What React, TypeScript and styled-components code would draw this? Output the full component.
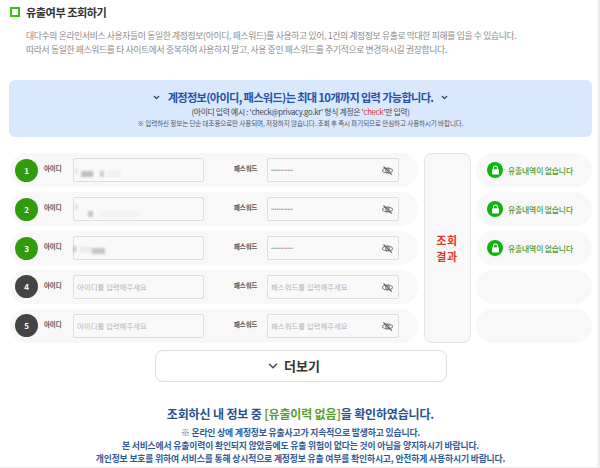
import * as React from 'react'
import styled, {createGlobalStyle} from 'styled-components'
import {ChevronDown} from 'lucide-react'

const Global = createGlobalStyle`
  html, body {
    margin: 0;
    padding: 0;
    background: #fff;
  }
  body {
    font-family: "Noto Sans CJK KR", "Noto Sans", sans-serif;
    color: #333;
  }
`

const Page = styled.div`
  width: 583px;
  height: 467px;
  overflow: hidden;
  border-right: 2px solid #ececec;
  border-bottom: 1px solid #ececec;
  padding: 0 6px 0 9px;
`

const TitleRow = styled.div`
  display: flex;
  align-items: center;
  gap: 6px;
  height: 24px;
`

const TitleMark = styled.span`
  display: block;
  width: 10px;
  height: 10px;
  margin-left: 1px;
  box-sizing: border-box;
  border: 2.5px solid #3cc212;
`

const Title = styled.h1`
  margin: 0;
  font-size: 11.2px;
  font-weight: 700;
  letter-spacing: -0.5px;
  color: #333;
`

const Intro = styled.p`
  margin: 5px 0 0 17px;
  font-size: 8.8px;
  line-height: 13.6px;
  letter-spacing: -0.34px;
  color: #8b8b8b;
  white-space: nowrap;
`

const Banner = styled.div`
  height: 57px;
  margin-top: 24px;
  background: #d9e8fd;
  border-radius: 6px;
  display: flex;
  flex-direction: column;
  align-items: center;
  padding-top: 9px;
  box-sizing: border-box;
`

const BannerTitle = styled.div`
  display: flex;
  align-items: center;
  gap: 7px;
  font-size: 11.2px;
  line-height: 17px;
  font-weight: 700;
  letter-spacing: -0.66px;
  color: #2452a8;
  svg {
    color: #26365c;
  }
`

const BannerHint = styled.div`
  font-size: 7.8px;
  line-height: 12px;
  letter-spacing: -0.3px;
  color: #444;
  em {
    font-style: normal;
    color: #d8352a;
  }
`

const BannerNote = styled.div`
  font-size: 6.5px;
  line-height: 10px;
  letter-spacing: -0.08px;
  color: #555;
`

const Board = styled.div`
  display: grid;
  grid-template-columns: 408px 47px 116px;
  column-gap: 5.5px;
  margin: 16px 0 0 1px;
`

const Rows = styled.div`
  display: flex;
  flex-direction: column;
  gap: 5.3px;
`

const Row = styled.div`
  height: 33.7px;
  display: flex;
  align-items: center;
  border-radius: 17px;
  background: #f8f8f8;
  padding-left: 5px;
`

const Badge = styled.span<{$active: boolean}>`
  width: 23px;
  height: 23px;
  flex: none;
  border-radius: 50%;
  display: flex;
  align-items: center;
  justify-content: center;
  font-size: 8px;
  font-weight: 700;
  color: #fff;
  background: ${props => (props.$active ? '#319c0b' : '#444')};
`

const FieldLabel = styled.span<{$width: number}>`
  width: ${props => props.$width}px;
  flex: none;
  align-self: center;
  margin-top: -3px;
  font-size: 6.4px;
  font-weight: 700;
  letter-spacing: -0.05px;
  color: #555;
`

const IdLabel = styled(FieldLabel)`
  margin-left: 6px;
`

const PwLabel = styled(FieldLabel)`
  margin-left: 30px;
`

const Field = styled.div<{$width: number}>`
  position: relative;
  width: ${props => props.$width}px;
  height: 24px;
  flex: none;
  box-sizing: border-box;
  display: flex;
  align-items: center;
  padding-left: 3px;
  background: #f9f9fa;
  border: 1px solid #dcdde0;
  border-radius: 2px;
  font-size: 7.4px;
  color: #b4b4b4;
  letter-spacing: 0.02px;
`

const EyeSlot = styled.svg`
  position: absolute;
  right: 4px;
  top: 6px;
  color: #666;
`

const Masked = styled.span<{$left: number; $top: number; $width: number; $dark: number}>`
  position: absolute;
  left: ${props => props.$left}px;
  top: ${props => props.$top}px;
  width: ${props => props.$width}px;
  height: 6px;
  background: rgba(120, 120, 130, ${props => props.$dark});
  filter: blur(1px);
`

const Dots = styled.span`
  font-family: "Liberation Sans", sans-serif;
  font-size: 5px;
  letter-spacing: 0.1px;
  color: #999;
`

const ResultBox = styled.div`
  height: 100%;
  box-sizing: border-box;
  background: #f8f8f8;
  border: 1px solid #e3e3e3;
  border-radius: 8px;
  display: flex;
  align-items: center;
  justify-content: center;
  text-align: center;
  font-size: 11px;
  line-height: 16px;
  letter-spacing: 0.6px;
  font-weight: 700;
  color: #dd3b24;
`

const Status = styled.div`
  height: 33.7px;
  display: flex;
  align-items: center;
  gap: 5px;
  padding-left: 11px;
  box-sizing: border-box;
  border-radius: 17px;
  background: #f8f8f8;
  font-size: 7.8px;
  font-weight: 500;
  letter-spacing: -0.14px;
  color: #4f9a2d;
`

const LockMark = styled.span`
  width: 16px;
  height: 16px;
  flex: none;
  border-radius: 50%;
  background: #0cb60c;
  display: flex;
  align-items: center;
  justify-content: center;
  color: #fff;
`

const MoreButton = styled.button`
  display: flex;
  align-items: center;
  justify-content: center;
  gap: 4px;
  width: 292px;
  height: 32px;
  margin: 7px 0 0 146px;
  padding: 0 16px 0 0;
  background: #fff;
  border: 1px solid #dedede;
  border-radius: 8px;
  font-family: inherit;
  font-size: 13px;
  font-weight: 700;
  color: #333;
  svg {
    color: #555;
  }
`

const Summary = styled.div`
  margin-top: 23px;
  text-align: center;
  color: #27508f;
  font-weight: 700;
`

const SummaryTitle = styled.div`
  font-size: 12px;
  line-height: 17px;
  letter-spacing: -0.16px;
  margin-bottom: 4px;
  em {
    font-style: normal;
    color: #5d9e2a;
  }
`

const SummaryLine = styled.div`
  font-size: 8.8px;
  line-height: 13.2px;
  letter-spacing: -0.14px;
  color: #2f5a96;
  white-space: nowrap;
`

const EyeIcon = () => (
  <EyeSlot width="13" height="11" viewBox="0 0 13 11" fill="none" stroke="currentColor" aria-hidden="true">
    <path d="M1 5.5C3.6 2.2 9.4 2.2 12 5.5C9.4 8.8 3.6 8.8 1 5.5Z" strokeWidth="1" />
    <circle cx="6.5" cy="5.5" r="1.8" strokeWidth="1" />
    <path d="M2.5 1.5L10.8 9.6" strokeWidth="1.3" />
  </EyeSlot>
)

const LockIcon = () => (
  <svg width="9" height="10" viewBox="0 0 9 10" aria-hidden="true">
    <path d="M2.5 4.5V3a2 2 0 0 1 4 0v1.5" fill="none" stroke="currentColor" strokeWidth="1.1" />
    <rect x="1" y="4.2" width="7" height="5.3" rx="0.8" fill="currentColor" />
  </svg>
)

type Patch = {left: number; top: number; width: number; dark: number}

type Account = {n: number; patches?: Patch[]}

const accounts: Account[] = [
  {n: 1, patches: [
    {left: 7, top: 12, width: 12, dark: 0.45},
    {left: 26, top: 12, width: 4, dark: 0.35},
    {left: 2, top: 9, width: 1, dark: 0.5},
    {left: 33, top: 12, width: 14, dark: 0.06},
  ]},
  {n: 2, patches: [
    {left: 2, top: 6, width: 1, dark: 0.5},
    {left: 14, top: 13, width: 5, dark: 0.4},
    {left: 25, top: 13, width: 40, dark: 0.05},
  ]},
  {n: 3, patches: [
    {left: 0, top: 9, width: 2, dark: 0.5},
    {left: 6, top: 10, width: 12, dark: 0.1},
    {left: 18, top: 11, width: 13, dark: 0.4},
  ]},
  {n: 4},
  {n: 5},
]

const App = () => (
  <Page>
    <Global />
    <TitleRow>
      <TitleMark />
      <Title>유출여부 조회하기</Title>
    </TitleRow>
    <Intro>
      대다수의 온라인서비스 사용자들이 동일한 계정정보(아이디, 패스워드)를 사용하고 있어, 1건의 계정정보 유출로 막대한 피해를 입을 수 있습니다.
      <br />
      따라서 동일한 패스워드를 타 사이트에서 중복하여 사용하지 말고, 사용 중인 패스워드를 주기적으로 변경하시길 권장합니다.
    </Intro>
    <Banner>
      <BannerTitle>
        <ChevronDown size={9} strokeWidth={3.5} />
        계정정보(아이디, 패스워드)는 최대 10개까지 입력 가능합니다.
        <ChevronDown size={9} strokeWidth={3.5} />
      </BannerTitle>
      <BannerHint>
        (아이디 입력 예시 : 'check@privacy.go.kr' 형식 계정은 '<em>check</em>'만 입력)
      </BannerHint>
      <BannerNote>※ 입력하신 정보는 단순 대조용으로만 사용되며, 저장하지 않습니다. 조회 후 즉시 파기되므로 안심하고 사용하시기 바랍니다.</BannerNote>
    </Banner>
    <Board>
      <Rows>
        {accounts.map(account => (
          <Row key={account.n}>
            <Badge $active={Boolean(account.patches)}>{account.n}</Badge>
            <IdLabel $width={29}>아이디</IdLabel>
            <Field $width={131}>
              {account.patches
                ? account.patches.map(patch => (
                    <Masked
                      key={patch.left}
                      $left={patch.left}
                      $top={patch.top}
                      $width={patch.width}
                      $dark={patch.dark}
                    />
                  ))
                : '아이디를 입력해주세요'}
            </Field>
            <PwLabel $width={33}>패스워드</PwLabel>
            <Field $width={132}>
              {account.patches ? <Dots>••••••••••••</Dots> : '패스워드를 입력해주세요'}
              <EyeIcon />
            </Field>
          </Row>
        ))}
      </Rows>
      <ResultBox>
        조회
        <br />
        결과
      </ResultBox>
      <Rows>
        {accounts.map(account => (
          <Status key={account.n}>
            {account.patches && (
              <>
                <LockMark>
                  <LockIcon />
                </LockMark>
                유출내역이 없습니다
              </>
            )}
          </Status>
        ))}
      </Rows>
    </Board>
    <MoreButton>
      <ChevronDown size={14} strokeWidth={3} />
      더보기
    </MoreButton>
    <Summary>
      <SummaryTitle>
        조회하신 내 정보 중 <em>[유출이력 없음]</em>을 확인하였습니다.
      </SummaryTitle>
      <SummaryLine>※ 온라인 상에 계정정보 유출사고가 지속적으로 발생하고 있습니다.</SummaryLine>
      <SummaryLine>본 서비스에서 유출이력이 확인되지 않았음에도 유출 위험이 없다는 것이 아님을 양지하시기 바랍니다.</SummaryLine>
      <SummaryLine>개인정보 보호를 위하여 서비스를 통해 상시적으로 계정정보 유출 여부를 확인하시고, 안전하게 사용하시기 바랍니다.</SummaryLine>
    </Summary>
  </Page>
)

export default App
